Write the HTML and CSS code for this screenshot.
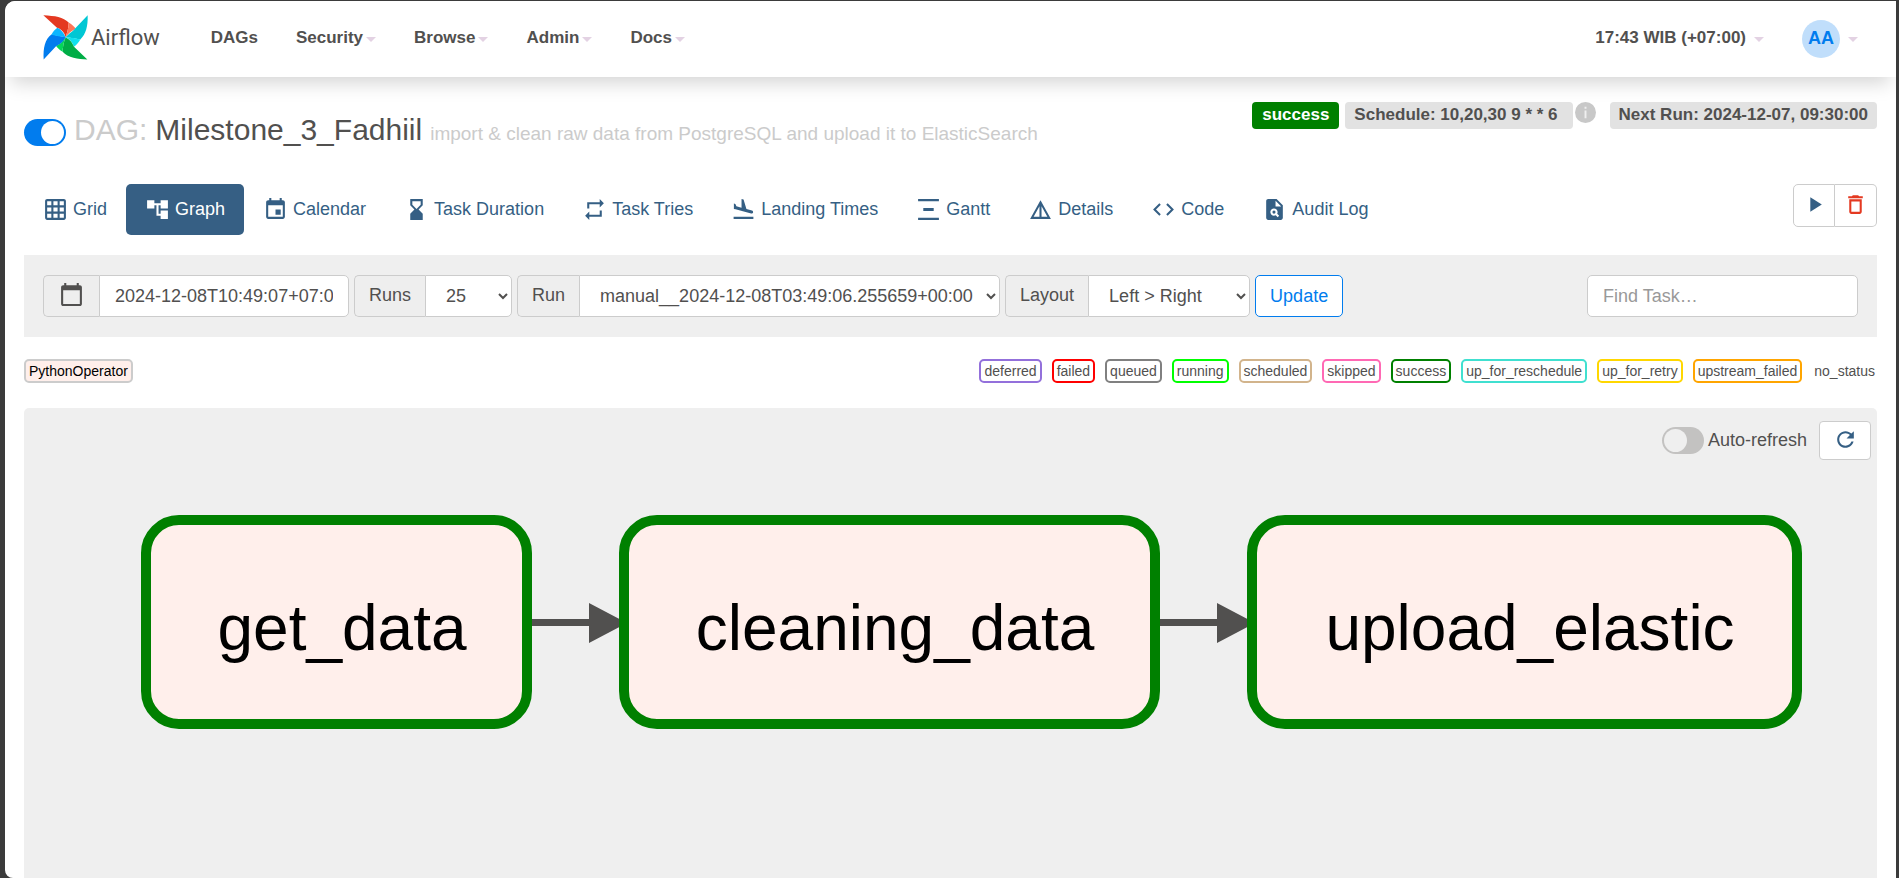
FILE: index.html
```html
<!DOCTYPE html>
<html lang="en">
<head>
<meta charset="utf-8">
<title>Milestone_3_Fadhiil - Graph - Airflow</title>
<link rel="stylesheet" href="styles.css">
</head>
<body>
<div class="window">
  <header class="navbar">
    <a class="brand" href="#">
      <svg class="brand-mark" viewBox="129 42 135 134" aria-hidden="true">
        <path fill="#e43921" d="M130 42C165 44 190 47 206 64 206 80 201 95 197 108 192 92 184 84 171 80Z"/>
        <path fill="#ff7557" d="M206 64C216 70 224 77 227 83 212 91 203 99 197 108 202 92 206 80 206 64Z"/>
        <path fill="#00c7d4" d="M263 42C264 75 258 98 241 115 225 112 210 109 197 108 208 95 220 90 226 81Z"/>
        <path fill="#11e1ee" d="M197 108C212 109 228 111 241 115 236 124 228 132 222 137 217 122 208 113 197 108Z"/>
        <path fill="#00ad46" d="M262 175L222 137C217 122 208 115 197 108 191 122 188 137 188 152 203 170 235 175 262 175Z"/>
        <path fill="#04d659" d="M197 108C190 125 188 140 188 152 178 147 170 138 168 134 184 126 190 118 197 108Z"/>
        <path fill="#017cee" d="M131 175L168 135C184 127 190 120 197 108 182 106 168 101 154 100 135 115 129 140 131 175Z"/>
        <path fill="#0cb6ff" d="M197 108C182 107 168 104 154 101 158 92 165 85 172 80 182 84 190 94 197 108Z"/>
      </svg>
      <span class="brand-name">Airflow</span>
    </a>
    <nav class="menu">
      <a href="#">DAGs</a>
      <a href="#">Security<span class="caret"></span></a>
      <a href="#">Browse<span class="caret"></span></a>
      <a href="#">Admin<span class="caret"></span></a>
      <a href="#">Docs<span class="caret"></span></a>
    </nav>
    <div class="menu menu-right">
      <a href="#">17:43 WIB (+07:00)<span class="caret caret-wide"></span></a>
      <a href="#"><span class="avatar">AA</span><span class="caret caret-wide"></span></a>
    </div>
  </header>

  <main class="content">
    <div class="heading">
      <h1 class="dag-title">
        <input class="switch" type="checkbox" checked aria-label="Pause or unpause DAG">
        <span class="muted">DAG:</span>
        <span>Milestone_3_Fadhiil</span>
        <small class="muted">import &amp; clean raw data from PostgreSQL and upload it to ElasticSearch</small>
      </h1>
      <div class="badges">
        <a class="badge badge-success" href="#">success</a>
        <a class="badge badge-schedule" href="#">Schedule: 10,20,30 9 * * 6</a>
        <svg class="info" viewBox="0 0 22 22" aria-label="Schedule information"><circle cx="11" cy="11" r="11" fill="#c8c8c8"/><path fill="#efefef" d="M10 5h2v2h-2zM10 9h2v8h-2z"/></svg>
        <span class="badge">Next Run: 2024-12-07, 09:30:00</span>
      </div>
    </div>

    <div class="tab-row">
      <nav class="tabs">
        <a class="tab" href="#"><svg class="icon" viewBox="0 0 24 24"><path d="M20 2H4c-1.1 0-2 .9-2 2v16c0 1.1.9 2 2 2h16c1.1 0 2-.9 2-2V4c0-1.1-.9-2-2-2zM8 20H4v-4h4v4zm0-6H4v-4h4v4zm0-6H4V4h4v4zm6 12h-4v-4h4v4zm0-6h-4v-4h4v4zm0-6h-4V4h4v4zm6 12h-4v-4h4v4zm0-6h-4v-4h4v4zm0-6h-4V4h4v4z"/></svg>Grid</a>
        <a class="tab tab-active" href="#"><svg class="icon" viewBox="0 0 24 24"><path d="M22 11V3h-7v3H9V3H2v8h7V8h2v10h4v3h7v-8h-7v3h-2V8h2v3z"/></svg>Graph</a>
        <a class="tab" href="#"><svg class="icon" viewBox="0 0 24 24"><path d="M17 12h-5v5h5v-5zM16 1v2H8V1H6v2H5c-1.11 0-1.99.9-1.99 2L3 19c0 1.1.89 2 2 2h14c1.1 0 2-.9 2-2V5c0-1.1-.9-2-2-2h-1V1h-2zm3 18H5V8h14v11z"/></svg>Calendar</a>
        <a class="tab" href="#"><svg class="icon" viewBox="0 0 24 24"><path d="M18 22l-.01-6L14 12l3.99-4.01L18 2H6v6l4 4-4 3.99V22h12zM8 7.5V4h8v3.5l-4 4-4-4z"/></svg>Task Duration</a>
        <a class="tab" href="#"><svg class="icon" viewBox="0 0 24 24"><path d="M7 7h10v3l4-4-4-4v3H5v6h2V7zm10 10H7v-3l-4 4 4 4v-3h12v-6h-2v4z"/></svg>Task Tries</a>
        <a class="tab" href="#"><svg class="icon" viewBox="0 0 24 24"><path d="M2.5 19h19v2h-19zm7.18-5.73l4.35 1.16 5.31 1.42c.8.21 1.62-.26 1.84-1.06.21-.8-.26-1.62-1.06-1.84l-5.31-1.42-2.76-9.02L10.12 2v8.28L5.15 8.95l-.93-2.32-1.45-.39v5.17l1.6.43 5.31 1.43z"/></svg>Landing Times</a>
        <a class="tab" href="#"><svg class="icon" viewBox="0 0 24 24"><path d="M22 2v2H2V2h20zM7 10.5v3h10v-3H7zM2 20v2h20v-2H2z"/></svg>Gantt</a>
        <a class="tab" href="#"><svg class="icon" viewBox="0 0 24 24"><path d="M12 3L2 21h20L12 3zm1 5.92L18.6 19H13V8.92zm-2 0V19H5.4L11 8.92z"/></svg>Details</a>
        <a class="tab" href="#"><svg class="icon" viewBox="0 0 24 24"><path d="M9.4 16.6L4.8 12l4.6-4.6L8 6l-6 6 6 6 1.4-1.4zm5.2 0l4.6-4.6-4.6-4.6L16 6l6 6-6 6-1.4-1.4z"/></svg>Code</a>
        <a class="tab" href="#"><svg class="icon" viewBox="0 0 24 24"><path fill-rule="evenodd" d="M14 2H6c-1.1 0-1.99.9-1.99 2L4 20c0 1.1.89 2 1.99 2H18c1.1 0 2-.9 2-2V8l-6-6zm1.04 17.45-1.88-1.88c-1.33.71-3.01.53-4.13-.59-1.37-1.37-1.37-3.58 0-4.95 1.37-1.37 3.58-1.37 4.95 0 1.12 1.12 1.31 2.8.59 4.13l1.88 1.88-1.41 1.41zM13 9V3.5L18.5 9H13zM11.5 13a1.5 1.5 0 1 0 0 3 1.5 1.5 0 0 0 0-3z"/></svg>Audit Log</a>
      </nav>
      <div class="actions">
        <button class="action" type="button" aria-label="Trigger DAG"><svg class="icon" viewBox="0 0 24 24"><path d="M8 5v14l11-7z"/></svg></button>
        <button class="action action-danger" type="button" aria-label="Delete DAG"><svg class="icon" viewBox="0 0 24 24"><path d="M6 19c0 1.1.9 2 2 2h8c1.1 0 2-.9 2-2V7H6v12zM8 9h8v10H8V9zm7.5-5l-1-1h-5l-1 1H5v2h14V4z"/></svg></button>
      </div>
    </div>

    <form class="filters">
      <div class="group">
        <label class="addon addon-icon" for="base-date" aria-label="Base date"><svg class="icon" viewBox="0 0 24 24"><path d="M20 3h-1V1h-2v2H7V1H5v2H4c-1.1 0-2 .9-2 2v16c0 1.1.9 2 2 2h16c1.1 0 2-.9 2-2V5c0-1.1-.9-2-2-2zm0 18H4V8h16v13z"/></svg></label>
        <input class="field field-date" id="base-date" type="text" value="2024-12-08T10:49:07+07:00">
      </div>
      <div class="group">
        <label class="addon" for="runs">Runs</label>
        <select class="field field-runs" id="runs"><option>25</option></select>
      </div>
      <div class="group">
        <label class="addon" for="run">Run</label>
        <select class="field field-run" id="run"><option>manual__2024-12-08T03:49:06.255659+00:00</option></select>
      </div>
      <div class="group">
        <label class="addon" for="layout">Layout</label>
        <select class="field field-layout" id="layout"><option>Left &gt; Right</option></select>
      </div>
      <button class="update" type="button">Update</button>
      <input class="find" type="text" placeholder="Find Task…" aria-label="Find Task">
    </form>

    <div class="legend">
      <span class="tag tag-operator">PythonOperator</span>
      <div class="states">
        <span class="tag deferred">deferred</span>
        <span class="tag failed">failed</span>
        <span class="tag queued">queued</span>
        <span class="tag running">running</span>
        <span class="tag scheduled">scheduled</span>
        <span class="tag skipped">skipped</span>
        <span class="tag success">success</span>
        <span class="tag up-for-reschedule">up_for_reschedule</span>
        <span class="tag up-for-retry">up_for_retry</span>
        <span class="tag upstream-failed">upstream_failed</span>
        <span class="tag no-status">no_status</span>
      </div>
    </div>

    <section class="graph">
      <div class="graph-tools">
        <label class="auto"><input class="switch" type="checkbox">Auto-refresh</label>
        <button class="refresh" type="button" aria-label="Refresh"><svg class="icon" viewBox="0 0 24 24"><path d="M17.65 6.35C16.2 4.9 14.21 4 12 4c-4.42 0-7.99 3.58-7.99 8s3.57 8 7.99 8c3.73 0 6.84-2.55 7.73-6h-2.08c-.82 2.33-3.04 4-5.65 4-3.31 0-6-2.69-6-6s2.69-6 6-6c1.66 0 3.14.69 4.22 1.78L13 11h7V4l-2.35 2.35z"/></svg></button>
      </div>
      <svg class="canvas" viewBox="0 0 1853 418">
        <g class="edge">
          <path d="M505 159h62v7h-62zM565 143l38 20-38 20z"/>
          <path d="M1133 159h62v7h-62zM1193 143l38 20-38 20z"/>
        </g>
        <g class="node">
          <rect x="122" y="60" width="381" height="204" rx="33"/>
          <rect x="600" y="60" width="531" height="204" rx="33"/>
          <rect x="1228" y="60" width="545" height="204" rx="33"/>
        </g>
        <g class="node-label">
          <text x="318" y="190">get_data</text>
          <text x="871" y="190">cleaning_data</text>
          <text x="1506" y="190">upload_elastic</text>
        </g>
      </svg>
    </section>
  </main>
</div>
</body>
</html>
```
FILE: styles.css
```css
* {
  box-sizing: border-box;
}

body {
  margin: 0;
  background: #3b3b3b;
  color: #51504f;
  font-family: "Liberation Sans", Arial, sans-serif;
  font-size: 18px;
  line-height: 25px;
}

a {
  color: inherit;
  text-decoration: none;
}

input,
select,
button {
  margin: 0;
  font: inherit;
  color: inherit;
}

.window {
  display: flex;
  flex-direction: column;
  height: calc(100vh - 1px);
  margin: 1px 3px 0 5px;
  overflow: hidden;
  background: #fff;
  border-radius: 10px 0 0 8px;
}

.icon {
  display: block;
  flex: none;
  width: 25px;
  height: 25px;
  fill: currentColor;
}

/* Navigation bar */
.navbar {
  display: flex;
  align-items: center;
  height: 76px;
  flex: none;
  padding: 0 38px 4px;
  background: #fff;
  box-shadow: 0 12px 18px -6px rgba(0, 0, 0, 0.17);
}

.brand {
  display: flex;
  align-items: center;
  gap: 3px;
  margin-right: 32px;
}

.brand-mark {
  width: 45px;
  height: 45px;
}

.brand-name {
  font-family: Roboto, sans-serif;
  font-size: 22px;
}

.menu {
  display: flex;
  align-items: center;
  font-size: 17px;
  font-weight: bold;
}

.menu a {
  display: flex;
  align-items: center;
  padding: 0 19px;
}

.menu-right {
  margin-left: auto;
}

.menu-right a:last-child {
  padding-right: 0;
}

.caret {
  margin: 4px 0 0 3px;
  border: 5px solid transparent;
  border-top-color: #e3d2e3;
  border-bottom: 0;
}

.caret-wide {
  margin-left: 8px;
}

.avatar {
  width: 38px;
  height: 38px;
  margin-top: 4px;
  border-radius: 50%;
  background: #c0defb;
  color: #017cee;
  font-size: 18px;
  line-height: 36px;
  text-align: center;
}

/* Page heading */
.content {
  display: flex;
  flex: 1;
  flex-direction: column;
  padding: 25px 19px 0;
}

.heading {
  display: flex;
  justify-content: space-between;
  align-items: flex-start;
}

.dag-title {
  display: flex;
  align-items: baseline;
  gap: 8px;
  margin: 8px 0 0;
  font-size: 30px;
  font-weight: normal;
  line-height: 40px;
}

.dag-title small {
  font-size: 19px;
}

.muted {
  color: #cbcbcb;
}

.switch {
  appearance: none;
  display: flex;
  flex: none;
  width: 42px;
  height: 27px;
  padding: 2px;
  border-radius: 14px;
  background: #c3c2c1;
}

.switch::before {
  content: "";
  width: 23px;
  height: 23px;
  border-radius: 50%;
  background: #efefef;
}

.switch:checked {
  justify-content: flex-end;
  background: #017cee;
}

.switch:checked::before {
  background: #fff;
}

.dag-title .switch {
  align-self: center;
}

.badges {
  display: flex;
  align-items: flex-start;
}

.badge {
  padding: 0 9px 2px;
  border-radius: 4px;
  background: #e2e2e2;
  font-size: 17px;
  font-weight: bold;
  line-height: 25px;
}

.badge-success {
  margin-right: 6px;
  padding: 0 10px 2px;
  background: #008000;
  color: #fff;
}

.badge-schedule {
  padding-right: 15px;
}

.info {
  width: 21px;
  height: 21px;
  margin: 0 14px 0 2px;
}

/* View tabs */
.tab-row {
  display: flex;
  justify-content: space-between;
  align-items: flex-start;
  margin-top: 30px;
}

.tabs {
  display: flex;
}

.tab {
  display: flex;
  align-items: center;
  gap: 5px;
  padding: 13px 19px;
  border-radius: 5px;
  color: #355f84;
}

.tab-active {
  background: #365f84;
  color: #fff;
}

.actions {
  display: flex;
}

.action {
  display: flex;
  align-items: center;
  justify-content: center;
  width: 42px;
  height: 43px;
  padding: 0 0 2px;
  border: 1px solid #ccc;
  border-radius: 5px 0 0 5px;
  background: #fff;
  color: #355f84;
}

.action-danger {
  border-left: 0;
  border-radius: 0 5px 5px 0;
  color: #e43921;
}

/* Filter bar */
.filters {
  display: flex;
  gap: 5px;
  margin-top: 20px;
  padding: 20px 19px;
  background: #efefef;
}

.group {
  display: flex;
}

.addon {
  display: flex;
  align-items: center;
  padding: 0 14px 2px;
  border: 1px solid #ccc;
  border-right: 0;
  border-radius: 5px 0 0 5px;
  background: #eee;
}

.addon-icon {
  padding: 0 15px 4px;
}

.field,
.find,
.update {
  height: 42px;
  border: 1px solid #ccc;
  border-radius: 5px;
  background: #fff;
}

.field {
  border-radius: 0 5px 5px 0;
}

select.field {
  padding: 0 0 0 16px;
}

.field-date {
  width: 250px;
  padding: 0 15px;
}

.field-runs {
  width: 87px;
}

.field-run {
  width: 421px;
}

.field-layout {
  width: 162px;
}

.update {
  padding: 0 14px;
  border-color: #017cee;
  color: #017cee;
}

.find {
  width: 271px;
  margin-left: auto;
  padding: 0 15px;
}

.find::placeholder {
  color: #999;
}

/* Operator and state legend */
.legend {
  display: flex;
  justify-content: space-between;
  margin: 22px 0 25px;
}

.states {
  display: flex;
  gap: 10px;
}

.tag {
  padding: 0 3px;
  border: 2px solid;
  border-radius: 5px;
  font-size: 14px;
  line-height: 20px;
}

.tag-operator {
  border-color: #ccc;
  background: #ffefeb;
  color: #000;
}

.deferred { border-color: mediumpurple; }
.failed { border-color: red; }
.queued { border-color: gray; }
.running { border-color: lime; }
.scheduled { border-color: tan; }
.skipped { border-color: hotpink; }
.success { border-color: green; }
.up-for-reschedule { border-color: turquoise; }
.up-for-retry { border-color: gold; }
.upstream-failed { border-color: orange; }

.no-status {
  padding: 2px;
  border: 0;
}

/* Graph */
.graph {
  display: flex;
  flex: 1;
  flex-direction: column;
  border-radius: 5px 5px 0 0;
  background: #efefef;
}

.graph-tools {
  display: flex;
  justify-content: flex-end;
  gap: 12px;
  padding: 13px 6px 0;
}

.auto {
  display: flex;
  align-items: center;
  gap: 4px;
}

.refresh {
  display: flex;
  align-items: center;
  justify-content: center;
  width: 52px;
  height: 39px;
  padding: 0 0 2px;
  border: 1px solid #ccc;
  border-radius: 4px;
  background: #fff;
  color: #355f84;
}

.canvas {
  display: block;
  width: 100%;
}

.edge {
  fill: #51504f;
}

.node {
  fill: #ffefeb;
  stroke: #008000;
  stroke-width: 10px;
}

.node-label {
  fill: #000;
  font-size: 64px;
  text-anchor: middle;
}
```
